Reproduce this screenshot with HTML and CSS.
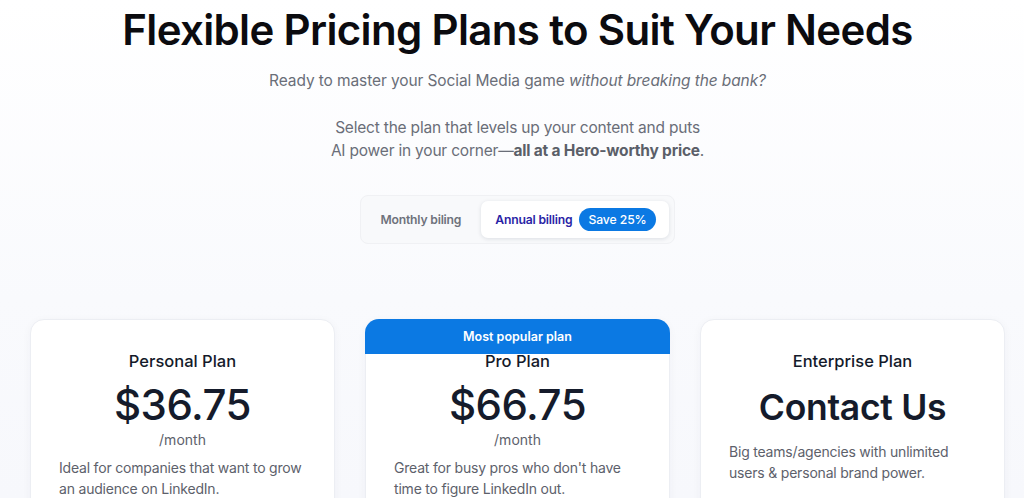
FILE: index.html
```html
<!DOCTYPE html>
<html lang="en">
<head>
<meta charset="utf-8">
<title>Pricing</title>
<link rel="stylesheet" href="styles.css">
</head>
<body>
<section class="pricing">
  <h1 class="title">Flexible Pricing Plans to Suit Your Needs</h1>
  <p class="lead">Ready to master your Social Media game <em>without breaking the bank?</em></p>
  <p class="intro">Select the plan that levels up your content and puts<br>AI power in your corner—<strong>all at a Hero-worthy price</strong>.</p>
  <div class="toggle">
    <button class="opt">Monthly biling</button>
    <button class="opt active">Annual billing <span class="badge">Save 25%</span></button>
  </div>
  <div class="cards">
    <article class="card">
      <h2 class="plan">Personal Plan</h2>
      <div class="price">$36.75</div>
      <div class="per">/month</div>
      <p class="desc">Ideal for companies that want to grow an audience on LinkedIn.</p>
    </article>
    <article class="card popular">
      <div class="ribbon">Most popular plan</div>
      <h2 class="plan">Pro Plan</h2>
      <div class="price">$66.75</div>
      <div class="per">/month</div>
      <p class="desc">Great for busy pros who don't have time to figure LinkedIn out.</p>
    </article>
    <article class="card">
      <h2 class="plan">Enterprise Plan</h2>
      <div class="price contact">Contact Us</div>
      <p class="desc">Big teams/agencies with unlimited users &amp; personal brand power.</p>
    </article>
  </div>
</section>
</body>
</html>
```
FILE: styles.css
```css
* { box-sizing: border-box; }
html, body { margin: 0; padding: 0; }
body {
  font-family: "Inter", "Liberation Sans", sans-serif;
  background: linear-gradient(180deg, #ffffff 0%, #f9fafd 60%, #f7f8fc 100%);
  height: 498px;
  overflow: hidden;
  color: #141a2a;
}
.pricing {
  display: flex;
  flex-direction: column;
  align-items: center;
  padding: 3px 0 0 11px;
}
.title {
  margin: 0;
  font-size: 42px;
  line-height: 54px;
  font-weight: 600;
  letter-spacing: -0.65px;
  color: #0b0b0f;
}
.lead {
  margin: 13px 0 0;
  font-size: 15.5px;
  line-height: 22px;
  color: #6a6e78;
  letter-spacing: -0.1px;
}
.lead em { font-style: italic; }
.intro {
  margin: 24px 0 0;
  text-align: center;
  font-size: 15.5px;
  line-height: 23px;
  color: #6a6e78;
  letter-spacing: -0.2px;
}
.intro strong { font-weight: 700; color: #5b5f69; }
.toggle {
  margin-top: 33px;
  display: flex;
  align-items: center;
  gap: 20px;
  padding: 5px 5px 5px 19px;
  background: #f8f9fb;
  border: 1px solid #f0f1f4;
  border-radius: 8px;
}
.opt {
  font-family: inherit;
  border: 0;
  background: transparent;
  font-size: 12.2px;
  font-weight: 600;
  color: #6e727c;
  padding: 0;
  cursor: pointer;
  letter-spacing: -0.2px;
}
.opt.active {
  display: flex;
  align-items: center;
  gap: 7px;
  background: #fff;
  color: #2a1fa6;
  padding: 7px 13px 7px 14px;
  border-radius: 7px;
  box-shadow: 0 1px 4px rgba(20, 30, 60, 0.12);
}
.badge {
  background: #0b79e3;
  color: #fff;
  font-weight: 500;
  font-size: 12.2px;
  padding: 4px 9px;
  border-radius: 12px;
  letter-spacing: -0.1px;
}
.cards {
  align-self: stretch;
  display: grid;
  grid-template-columns: repeat(3, 305px);
  gap: 30px;
  padding-left: 19px;
  margin-top: 75px;
}
.card {
  position: relative;
  background: #fff;
  border: 1px solid #eceef3;
  border-radius: 14px;
  padding: 30px 28px 24px;
  height: 200px;
  box-shadow: 0 2px 10px rgba(30, 40, 80, 0.04);
  text-align: center;
}
.ribbon {
  position: absolute;
  top: -1px;
  left: -1px;
  right: -1px;
  height: 35px;
  background: #0b79e3;
  color: #fff;
  border-radius: 14px 14px 0 0;
  font-size: 12.5px;
  font-weight: 600;
  display: flex;
  align-items: center;
  justify-content: center;
}
.plan {
  margin: 0;
  font-size: 16.5px;
  line-height: 22px;
  font-weight: 500;
  color: #141a2a;
}
.popular .plan { position: relative; }
.price {
  margin-top: 8px;
  font-size: 42px;
  line-height: 50px;
  font-weight: 500;
  letter-spacing: -0.5px;
  color: #151b2b;
}
.price.contact { font-weight: 600; font-size: 35.5px; margin-top: 11px; letter-spacing: -0.3px; }
.per {
  margin-top: 1px;
  font-size: 14px;
  line-height: 18px;
  color: #5d616b;
}
.desc {
  margin: 8px 0 0;
  text-align: left;
  font-size: 14px;
  line-height: 21px;
  color: #5d616b;
  letter-spacing: -0.2px;
}
.contact + .desc { margin-top: 8px; }
```
